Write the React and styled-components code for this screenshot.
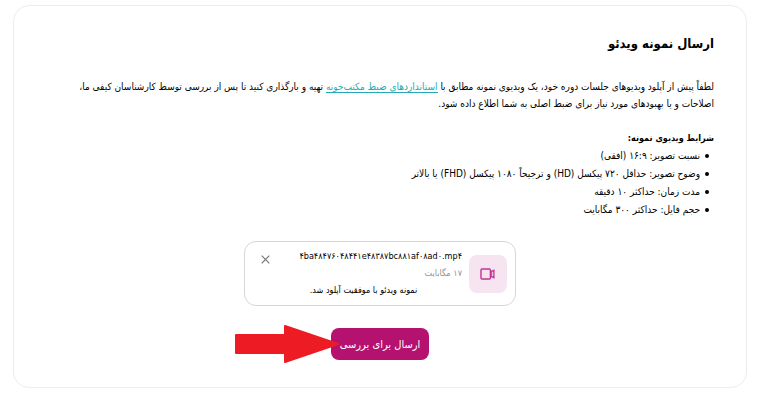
import React, { useState } from 'react';
import styled, { createGlobalStyle } from 'styled-components';

const requirements = [
  'نسبت تصویر: ۱۶:۹ (افقی)',
  'وضوح تصویر: حداقل ۷۲۰ پیکسل (HD) و ترجیحاً ۱۰۸۰ پیکسل (FHD) یا بالاتر',
  'مدت زمان: حداکثر ۱۰ دقیقه',
  'حجم فایل: حداکثر ۳۰۰ مگابایت',
];

const App = () => {
  const [file, setFile] = useState({
    name: '۴ba۴۸۴۷۶۰۴۸۴۴۱e۴۸۳۸۷bc۸۸۱af۰۸ad۰.mp۴',
    size: '۱۷ مگابایت',
  });

  return (
    <>
      <GlobalStyle />
      <Page dir="rtl" lang="fa">
        <Card>
          <Title>ارسال نمونه ویدئو</Title>

          <Description>
            لطفاً پیش از آپلود ویدیوهای جلسات دوره خود، یک ویدیوی نمونه مطابق با{' '}
            <GuideLink href="#standards">استانداردهای ضبط مکتب‌خونه</GuideLink> تهیه و بارگذاری
            کنید تا پس از بررسی توسط کارشناسان کیفی ما، اصلاحات و یا بهبودهای مورد نیاز برای ضبط
            اصلی به شما اطلاع داده شود.
          </Description>

          <SectionTitle>شرایط ویدیوی نمونه:</SectionTitle>
          <Requirements>
            {requirements.map((item) => (
              <Requirement key={item}>{item}</Requirement>
            ))}
          </Requirements>

          {file && (
            <FileBox>
              <FileIcon>
                <svg width="16" height="12" viewBox="0 0 16 12" fill="none" stroke="#c2348f">
                  <rect x="1" y="1" width="9.4" height="10" rx="1" strokeWidth="1.4" />
                  <path d="M10.6 3.4H11.6L13.9 2.3V9.7L11.6 8.6H10.6" strokeWidth="1.3" />
                  <path d="M11.7 3.4V8.6" strokeWidth="1" />
                </svg>
              </FileIcon>
              <FileInfo>
                <FileName dir="ltr">{file.name}</FileName>
                <FileSize>{file.size}</FileSize>
                <FileStatus>نمونه ویدئو با موفقیت آپلود شد.</FileStatus>
              </FileInfo>
              <RemoveButton type="button" aria-label="حذف فایل" onClick={() => setFile(null)}>
                <svg width="9" height="9" viewBox="0 0 9 9" stroke="#777" strokeWidth="1.2">
                  <path d="M.7.7 8.3 8.3M8.3.7.7 8.3" />
                </svg>
              </RemoveButton>
            </FileBox>
          )}

          <Actions>
            <SubmitButton type="button">ارسال برای بررسی</SubmitButton>
            <Arrow width="104" height="38" viewBox="0 0 104 38" aria-hidden="true">
              <path
                d="M1 10H50V1L103 19 50 37V28H1Z"
                fill="#ed1c24"
                stroke="#ed1c24"
                strokeWidth="2"
                strokeLinejoin="round"
              />
            </Arrow>
          </Actions>
        </Card>
      </Page>
    </>
  );
};

const GlobalStyle = createGlobalStyle`
  * {
    box-sizing: border-box;
  }

  body {
    margin: 0;
    background: #fff;
    color: #000;
    font-family: 'DejaVu Sans Condensed', 'DejaVu Sans', sans-serif;
    font-size: 10px;
  }
`;

const Page = styled.main`
  padding: 5px 21px 19px 13px;
`;

const Card = styled.section`
  padding: 25px 32px 27px;
  border: 1px solid #ededed;
  border-radius: 16px;
`;

const Title = styled.h1`
  margin: 0 0 21px;
  font-size: 13px;
  font-weight: 700;
  line-height: 26px;
`;

const Description = styled.p`
  margin: 0 0 17px;
  padding-left: 12px;
  line-height: 17px;
`;

const GuideLink = styled.a`
  color: #25a9b4;
  text-decoration: none;
  border-bottom: 1px solid #25a9b4;
`;

const SectionTitle = styled.h2`
  margin: 0;
  font-size: 9px;
  font-weight: 700;
  line-height: 18px;
`;

const Requirements = styled.ul`
  margin: 0 0 22px;
  padding: 0;
  line-height: 18px;
  list-style: none;
`;

const Requirement = styled.li`
  display: flex;
  align-items: center;
  gap: 5px;
  padding-right: 5px;

  &::before {
    content: '';
    width: 4px;
    height: 4px;
    border-radius: 50%;
    background: currentColor;
  }
`;

const FileBox = styled.div`
  display: flex;
  align-items: center;
  gap: 7px;
  max-width: 272px;
  margin: 0 auto;
  padding: 6px 8px;
  border: 1px solid #d6d6d6;
  border-radius: 12px;
`;

const FileIcon = styled.div`
  display: flex;
  align-items: center;
  justify-content: center;
  flex: none;
  width: 38px;
  height: 38px;
  border-radius: 8px;
  background: #f6e5f0;
`;

const FileInfo = styled.div`
  display: flex;
  flex: 1;
  flex-direction: column;
  align-items: flex-start;
  font-size: 9px;
  line-height: 17px;
`;

const FileName = styled.span`
  white-space: nowrap;
`;

const FileSize = styled.span`
  color: #929292;
`;

const FileStatus = styled.span`
  align-self: center;
  padding-right: 20px;
`;

const RemoveButton = styled.button`
  display: flex;
  align-self: flex-start;
  flex: none;
  padding: 7px 8px;
  border: 0;
  background: none;
  cursor: pointer;
`;

const Actions = styled.div`
  position: relative;
  width: fit-content;
  margin: 22px auto 0;
`;

const SubmitButton = styled.button`
  display: block;
  height: 32px;
  padding: 0 9px;
  border: 0;
  border-radius: 8px;
  background: #b5126f;
  color: #fff;
  font-family: inherit;
  font-size: 11px;
  cursor: pointer;
`;

/* points at the submit button and overlaps its edge */
const Arrow = styled.svg`
  position: absolute;
  top: -3px;
  right: calc(100% - 8px);
`;

export default App;
